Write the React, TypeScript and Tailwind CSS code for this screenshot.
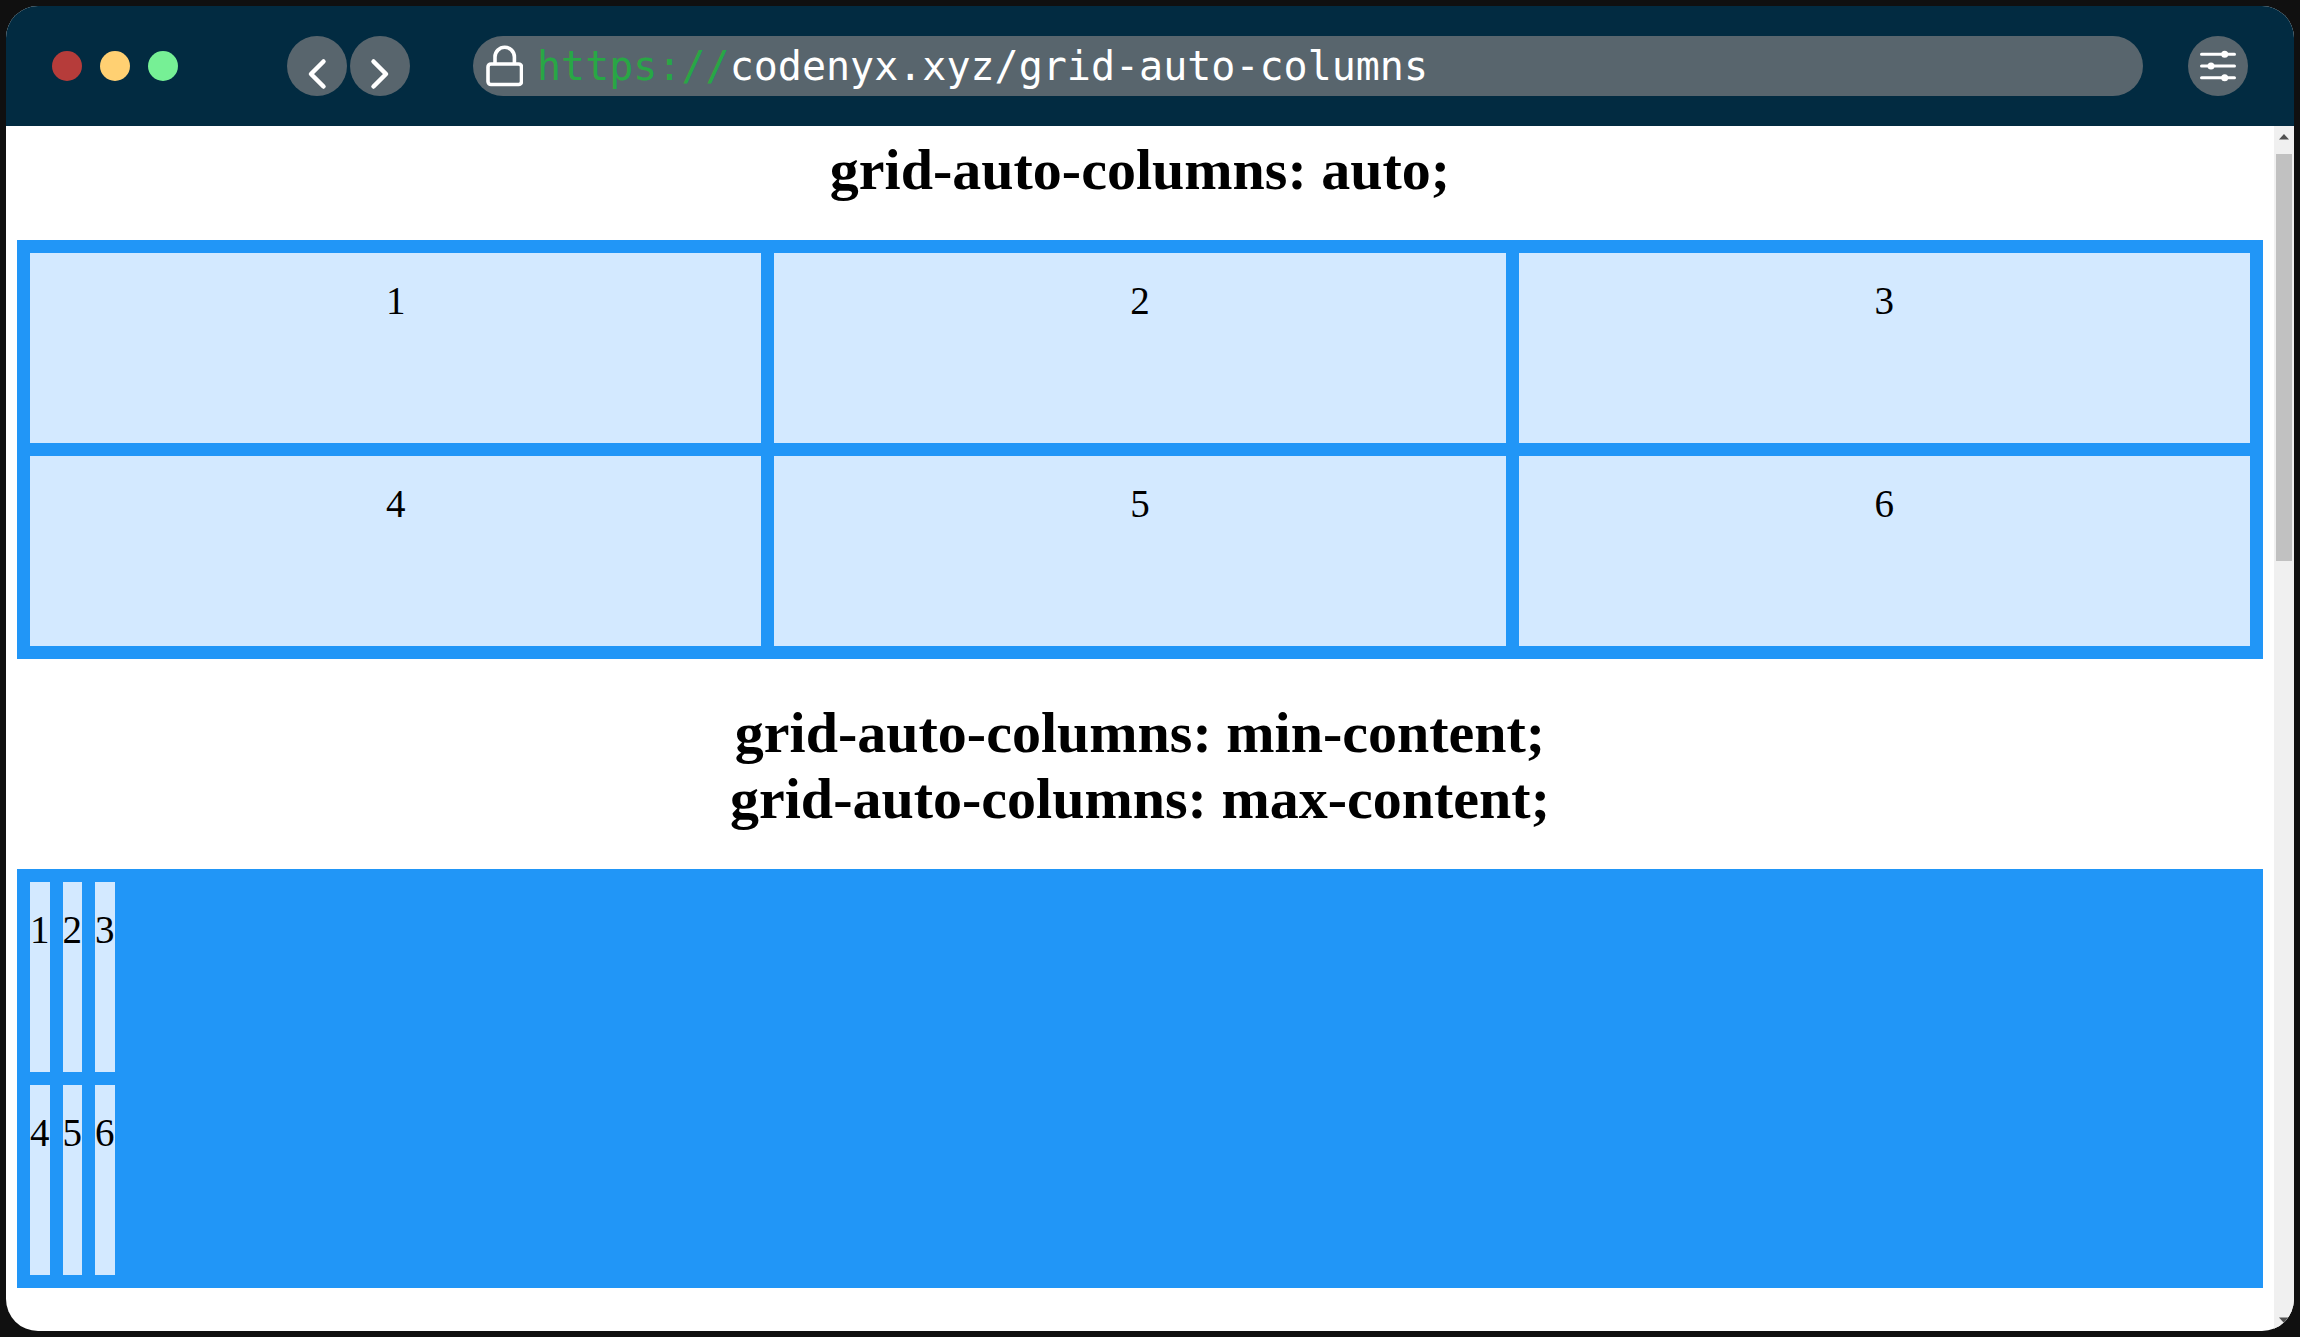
import { useState } from "react";

const cells = [1, 2, 3, 4, 5, 6];

function Cell({ value }: { value: number }) {
  return <div className="h-[190px] bg-[#d3e9ff] pt-[26px] text-center text-[39px] leading-[44px]">{value}</div>;
}

function Heading({ lines }: { lines: string[] }) {
  return (
    <h1 className="mb-[37px] text-center text-[58px] leading-[66px] font-bold">
      {lines.map((line) => (
        <span key={line} className="block">
          {line}
        </span>
      ))}
    </h1>
  );
}

function RoundButton({ label, children }: { label: string; children: React.ReactNode }) {
  return (
    <button type="button" aria-label={label} className="size-[60px] shrink-0 rounded-full bg-[#58656d] text-white">
      <svg viewBox="0 0 60 60" className="size-full" fill="none" stroke="currentColor" strokeLinecap="round" strokeLinejoin="round">
        {children}
      </svg>
    </button>
  );
}

function Toolbar() {
  const [address, setAddress] = useState("codenyx.xyz/grid-auto-columns");
  return (
    <header className="flex h-[120px] shrink-0 items-center bg-[#022b41] px-[46px]">
      <div className="flex shrink-0 gap-[18px]">
        <span className="size-[30px] rounded-full bg-[#b63c3a]" />
        <span className="size-[30px] rounded-full bg-[#ffd072]" />
        <span className="size-[30px] rounded-full bg-[#76f095]" />
      </div>
      <nav className="ml-[109px] flex shrink-0 gap-[3px]">
        <RoundButton label="Back">
          <path d="M36.5 25.5 24 38l12.5 12.5" strokeWidth="4.5" />
        </RoundButton>
        <RoundButton label="Forward">
          <path d="M23.5 25.5 36 38 23.5 50.5" strokeWidth="4.5" />
        </RoundButton>
      </nav>
      <div className="mr-[45px] ml-[63px] flex h-[60px] min-w-0 flex-1 items-center rounded-full bg-[#58656d] pr-6 pl-3 font-['DejaVu_Sans_Mono',monospace] text-[40px]">
        <svg viewBox="0 0 38 42" className="mr-3.5 h-[42px] w-[38px] shrink-0" fill="none" stroke="white" strokeWidth="3.6">
          <rect x="3" y="19" width="33.5" height="20.5" rx="3" />
          <path d="M10 19V12a9.7 9.7 0 0 1 19.4 0v7" />
        </svg>
        <label htmlFor="address" className="shrink-0 text-[#28a745]">
          https://
        </label>
        <input
          id="address"
          type="text"
          spellCheck={false}
          value={address}
          onChange={(e) => setAddress(e.target.value)}
          className="h-[60px] min-w-0 flex-1 bg-transparent text-white outline-none"
        />
      </div>
      <RoundButton label="Settings">
        <path d="M13.5 18.3H46.5M13.5 30H46.5M13.5 41.7H46.5" strokeWidth="3" />
        <g fill="currentColor" stroke="none">
          <circle cx="36.7" cy="18.3" r="3.5" />
          <circle cx="23" cy="30" r="3.5" />
          <circle cx="36.7" cy="41.7" r="3.5" />
        </g>
      </RoundButton>
    </header>
  );
}

function Scrollbar() {
  return (
    <div aria-hidden="true" className="flex w-5 shrink-0 flex-col items-center bg-[#f0f0f0] pt-2">
      <svg viewBox="0 0 10 6" className="h-1.5 w-2.5 shrink-0 fill-[#505050]">
        <path d="M5 0 10 5.5H0Z" />
      </svg>
      <div className="mt-3.5 h-[407px] w-4 bg-[#c1c1c1]" />
      <svg viewBox="0 0 10 6" className="mt-auto mb-2 h-1.5 w-2.5 shrink-0 fill-[#505050]">
        <path d="M0 .5H10L5 6Z" />
      </svg>
    </div>
  );
}

export default function App() {
  return (
    <div className="flex min-h-screen flex-col bg-[#101010] p-1.5">
      <div className="flex flex-1 flex-col overflow-hidden rounded-[32px] bg-white">
        <Toolbar />
        <div className="flex flex-1">
          <main className="min-w-0 flex-1 px-[11px] pt-[11px] font-['Liberation_Serif',serif] text-black">
            <Heading lines={["grid-auto-columns: auto;"]} />
            <section className="mb-[41px] grid grid-cols-3 gap-[13px] bg-[#2196f7] p-[13px]">
              {cells.map((n) => (
                <Cell key={n} value={n} />
              ))}
            </section>
            <Heading lines={["grid-auto-columns: min-content;", "grid-auto-columns: max-content;"]} />
            <section className="grid grid-cols-[repeat(3,min-content)] gap-[13px] bg-[#2196f7] p-[13px]">
              {cells.map((n) => (
                <Cell key={n} value={n} />
              ))}
            </section>
          </main>
          <Scrollbar />
        </div>
      </div>
    </div>
  );
}
